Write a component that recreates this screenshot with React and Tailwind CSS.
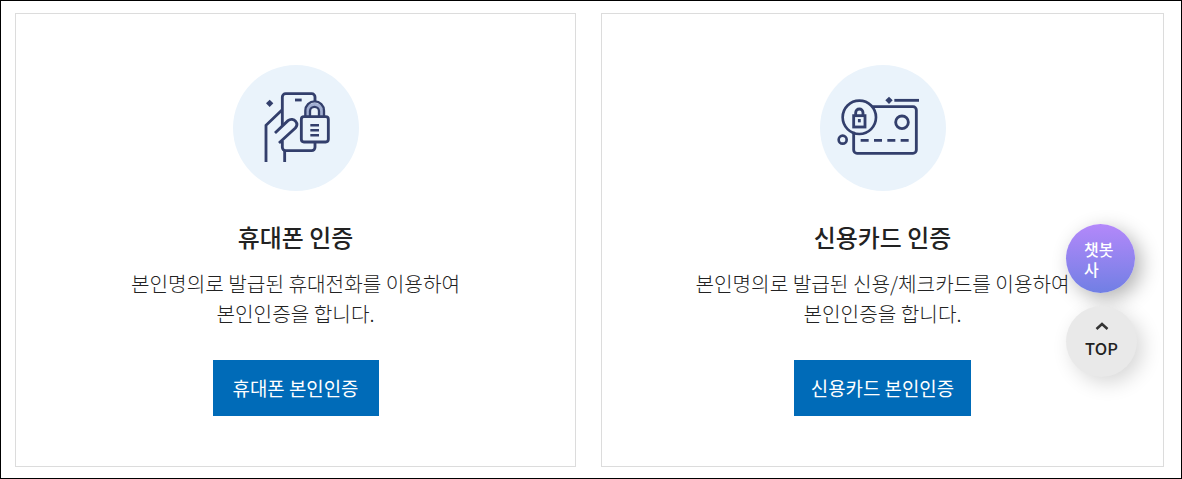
function PhoneIcon() {
  return (
    <svg className="size-full" viewBox="24 15 378 378" fill="none" stroke="#333f6c" strokeWidth="8.500">
      <path d="M172 197V111a10 10 0 0 1 10-10h78a10 10 0 0 1 10 10v14M270 247v15a10 10 0 0 1-10 10h-78a10 10 0 0 1-10-10v-20" />
      <path d="M210 120h20" />
      <path d="M123 306V196l48-46M179 272v34" />
      <path d="M150 219l39-37c8-7 18-4 23 2s4 14-1 20l-49 45" />
      <path d="M248 170v-16a21 21 0 0 1 42 0v16" stroke="#a3b0d3" strokeWidth="10" />
      <path d="M241 170v-18a28 28 0 0 1 56 0v18M255 170v-16a13.500 13.500 0 0 1 27 0v16" strokeWidth="7" />
      <rect x="229" y="170" width="81" height="76" rx="8" />
      <path d="M256 196h26M256 211h26M256 226h26" strokeWidth="7.500" />
      <path d="M134 119l11 11-11 11-11-11z" fill="#333f6c" stroke="none" />
    </svg>
  );
}

function CardIcon() {
  return (
    <svg className="size-full" viewBox="15 15 378 378" fill="none" stroke="#333f6c" strokeWidth="8.500">
      <path d="M172 140h122a10 10 0 0 1 10 10v120a10 10 0 0 1-10 10H126a10 10 0 0 1-10-10v-55" />
      <circle cx="133" cy="172" r="50" strokeWidth="8" />
      <rect x="116" y="167" width="34" height="34" />
      <path d="M122 167v-9a11 11 0 0 1 22 0v9" />
      <path d="M133 177v10" />
      <circle cx="261" cy="187" r="19" />
      <circle cx="83" cy="239" r="12" strokeWidth="8" />
      <path d="M137 241h24M177 241h24M217 241h24M257 241h24" />
      <path d="M238 121h74" />
      <path d="M222 110l11 11-11 11-11-11z" fill="#333f6c" stroke="none" />
    </svg>
  );
}

const METHODS = [
  {
    id: 'phone',
    icon: PhoneIcon,
    title: '휴대폰 인증',
    lines: ['본인명의로 발급된 휴대전화를 이용하여', '본인인증을 합니다.'],
    button: '휴대폰 본인인증',
    buttonWidth: 'w-[166px]',
  },
  {
    id: 'card',
    icon: CardIcon,
    title: '신용카드 인증',
    lines: ['본인명의로 발급된 신용/체크카드를 이용하여', '본인인증을 합니다.'],
    button: '신용카드 본인인증',
    buttonWidth: 'w-[177px]',
  },
];

function MethodCard({ method }) {
  const Icon = method.icon;

  return (
    <section className="flex h-[454px] flex-col items-center border border-[#dcdcdc] pt-[51px]">
      <div className="size-[126px] rounded-full bg-[#eaf3fb]">
        <Icon />
      </div>
      <h2 className="mt-7 text-[23.900px] leading-9 font-medium text-[#222]">{method.title}</h2>
      <p className="mt-3.5 text-center text-[20.200px] leading-[30px] font-light whitespace-nowrap text-[#222]">
        {method.lines[0]}
        <br />
        {method.lines[1]}
      </p>
      <button className={'mt-[31px] h-[55.500px] bg-[#006bb8] text-[18.900px] whitespace-nowrap text-white ' + method.buttonWidth}>
        {method.button}
      </button>
    </section>
  );
}

export default function App() {
  return (
    <main className="relative h-[479px] w-[1182px] overflow-hidden border border-black bg-white font-['Noto_Sans_CJK_KR',sans-serif]">
      <div className="grid grid-cols-[561px_563px] gap-[25px] pt-3 pl-3.5">
        {METHODS.map(method => (
          <MethodCard key={method.id} method={method} />
        ))}
      </div>

      <div className="absolute top-[223px] left-[1065px] flex flex-col items-start gap-[13px]">
        <button className="flex size-[69px] items-center rounded-full bg-linear-to-b from-[#b388fa] to-[#707fe4] pr-[17px] pl-[18px] text-left text-[16px] leading-5 font-medium text-white shadow-[6px_6px_20px_rgba(0,0,0,0.3)]">
          <span className="w-[34px] break-all">챗봇사</span>
        </button>
        <button className="flex size-[71px] flex-col items-center rounded-full bg-[#e9e9e9] pt-3.5 text-[#222] shadow-[6px_6px_20px_rgba(0,0,0,0.16)]">
          <svg className="h-3 w-3.5" viewBox="0 0 14 12" fill="none" stroke="#333" strokeWidth="2.500">
            <path d="M1.500 9L7 4l5.500 5" />
          </svg>
          <span className="text-[16.500px] leading-8 font-medium">TOP</span>
        </button>
      </div>
    </main>
  );
}
